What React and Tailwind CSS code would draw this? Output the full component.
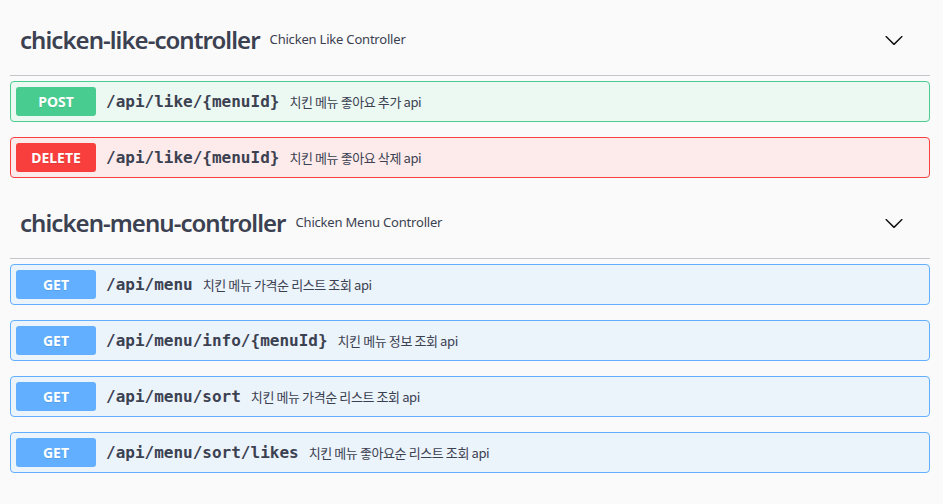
import React from "react";

const SANS = '"Noto Sans", "Noto Sans CJK KR", sans-serif';
const KR = '"Noto Sans CJK KR", "Noto Sans", sans-serif';

const Chevron = () => (
  <svg width="20" height="20" viewBox="0 0 20 20" className="fill-[#111]">
    <path d="M17.418 6.109c.272-.268.709-.268.979 0s.271.701 0 .969l-7.908 7.83c-.27.268-.707.268-.979 0l-7.908-7.83c-.27-.268-.27-.701 0-.969.271-.268.709-.268.979 0L10 13.25l7.418-7.141z" />
  </svg>
);

const styles = {
  POST: { row: "border-[#49cc90] bg-[#ecf8f2]", badge: "bg-[#49cc90]" },
  DELETE: { row: "border-[#f93e3e] bg-[#fdebeb]", badge: "bg-[#f93e3e]" },
  GET: { row: "border-[#61affe] bg-[#ebf3fb]", badge: "bg-[#61affe]" },
};

const Op = ({ method, path, desc }) => {
  const s = styles[method];
  return (
    <div className={`flex items-center mb-[15px] h-[41px] rounded-[4px] border p-[5px] ${s.row}`}>
      <div
        className={`w-[80px] h-[29px] rounded-[3px] flex items-center justify-center text-white text-[14px] font-bold ${s.badge}`}
        style={{ fontFamily: SANS, textShadow: "0 1px 0 rgba(0,0,0,.1)" }}
      >
        {method}
      </div>
      <span
        className="px-[10px] text-[16px] font-bold text-[#3b4151]"
        style={{ fontFamily: '"DejaVu Sans Mono", monospace' }}
      >
        {path}
      </span>
      <span className="text-[13px] tracking-[-0.4px] text-[#3b4151]" style={{ fontFamily: KR }}>
        {desc}
      </span>
    </div>
  );
};

const Tag = ({ name, desc }) => (
  <div className="flex items-center h-[66px] pl-[10px] pr-[26px] pb-[5px] border-b border-[#c4c6cb] mb-[5px]">
    <span
      className="text-[24px] font-semibold tracking-[-0.95px] text-[#3b4151]"
      style={{ fontFamily: SANS }}
    >
      {name}
    </span>
    <span
      className="ml-[10px] text-[13px] tracking-[-0.2px] text-[#3b4151] flex-1"
      style={{ fontFamily: SANS }}
    >
      {desc}
    </span>
    <Chevron />
  </div>
);

export default function App() {
  return (
    <div className="min-h-[504px] w-full bg-[#fafafa] pt-[10px]">
      <div className="ml-[10px] w-[920px]">
        <Tag name="chicken-like-controller" desc="Chicken Like Controller" />
        <Op method="POST" path="/api/like/{menuId}" desc="치킨 메뉴 좋아요 추가 api" />
        <Op method="DELETE" path="/api/like/{menuId}" desc="치킨 메뉴 좋아요 삭제 api" />
        <Tag name="chicken-menu-controller" desc="Chicken Menu Controller" />
        <Op method="GET" path="/api/menu" desc="치킨 메뉴 가격순 리스트 조회 api" />
        <Op method="GET" path="/api/menu/info/{menuId}" desc="치킨 메뉴 정보 조회 api" />
        <Op method="GET" path="/api/menu/sort" desc="치킨 메뉴 가격순 리스트 조회 api" />
        <Op method="GET" path="/api/menu/sort/likes" desc="치킨 메뉴 좋아요순 리스트 조회 api" />
      </div>
    </div>
  );
}
